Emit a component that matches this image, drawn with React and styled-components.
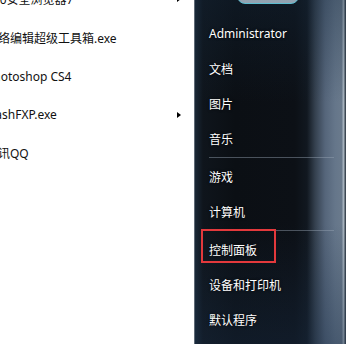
import styled, { createGlobalStyle } from "styled-components";

// style
const GlobalStyle = createGlobalStyle`
  html, body {
    margin: 0;
    padding: 0;
    background: #fff;
  }
  body {
    font-family: "Noto Sans", "Noto Sans CJK SC", sans-serif;
    font-size: 12px;
  }
`;

const Screen = styled.div`
  display: flex;
  width: 346px;
  height: 344px;
  overflow: hidden;
`;

const ProgramPane = styled.div`
  width: 194px;
  flex: none;
  background: #fff;
  overflow: hidden;
`;

const ProgramList = styled.ul`
  list-style: none;
  margin: -20px 0 0 -14px;
  padding: 0;
`;

const ProgramItem = styled.li`
  display: flex;
  align-items: center;
  justify-content: space-between;
  height: 38.5px;
  padding-right: 13px;
  color: #111;
  white-space: nowrap;
`;

const SubArrow = styled.span`
  width: 0;
  height: 0;
  border-top: 3.5px solid transparent;
  border-bottom: 3.5px solid transparent;
  border-left: 4px solid #000;
`;

const PlacesPane = styled.div`
  flex: 1;
  display: flex;
  flex-direction: column;
  border-left: 1px solid #5f6a76;
  background:
    radial-gradient(ellipse 14px 20px at 343px 95px, rgba(30, 45, 70, 0.9), transparent),
    radial-gradient(ellipse 14px 20px at 343px 305px, rgba(30, 45, 70, 0.9), transparent),
    linear-gradient(to bottom, rgba(20, 40, 60, 0.35), transparent 30%, transparent 65%, rgba(25, 45, 70, 0.4)),
    linear-gradient(
      to right,
      #1a2836 0px,
      #0f151c 8px,
      #0b0f14 40px,
      #0c1016 100px,
      #111820 112px,
      #34404e 120px,
      #55657a 130px,
      #65768a 140px,
      #6a7a8c 147px,
      #a6b2bd 148px,
      #a6b2bd 149px,
      #3e4954 150px
    );
`;

const UserTile = styled.div`
  width: 62px;
  height: 60px;
  margin: -56px 0 0 42px;
  box-sizing: border-box;
  border: 1.5px solid #5cbdd0;
  border-radius: 8px;
  background: linear-gradient(to bottom, #6c7f90, #94a4b2);
  flex: none;
`;

const PlacesList = styled.div`
  display: flex;
  flex-direction: column;
  padding: 12px 0 0 14px;
`;

const Place = styled.div`
  height: 35px;
  display: flex;
  align-items: ${(p) => (p.$marked ? "flex-start" : "center")};
  color: #fff;
  text-shadow: 0 0 3px rgba(0, 0, 0, 0.9);
  white-space: nowrap;
`;

const MarkBox = styled.span`
  display: flex;
  align-items: center;
  box-sizing: border-box;
  height: 34px;
  margin: -3px 0 0 -8px;
  padding: 7px 17px 0 6px;
  border: 2px solid #e3393c;
`;

const Separator = styled.div`
  height: 1px;
  margin: 1px 12px 1px 0;
  background: rgba(150, 165, 180, 0.45);
`;

const programs = [
  { name: "360安全浏览器7", sub: true },
  { name: "网络编辑超级工具箱.exe" },
  { name: "Photoshop CS4" },
  { name: "FlashFXP.exe", sub: true },
  { name: "腾讯QQ" },
];

const places = [
  ["Administrator", "文档", "图片", "音乐"],
  ["游戏", "计算机"],
  ["控制面板", "设备和打印机", "默认程序"],
];

const App = () => {
  return (
    <>
      <GlobalStyle />
      <Screen>
        {/* all programs */}
        <ProgramPane>
          <ProgramList>
            {programs.map((p) => (
              <ProgramItem key={p.name}>
                <span>{p.name}</span>
                {p.sub && <SubArrow />}
              </ProgramItem>
            ))}
          </ProgramList>
        </ProgramPane>

        {/* right column */}
        <PlacesPane>
          <UserTile />
          <PlacesList>
            {places.map((group, gi) => (
              <div key={gi}>
                {gi > 0 && <Separator />}
                {group.map((name) =>
                  name === "控制面板" ? (
                    <Place key={name} $marked>
                      <MarkBox>{name}</MarkBox>
                    </Place>
                  ) : (
                    <Place key={name}>{name}</Place>
                  )
                )}
              </div>
            ))}
          </PlacesList>
        </PlacesPane>
      </Screen>
    </>
  );
};

export default App;
